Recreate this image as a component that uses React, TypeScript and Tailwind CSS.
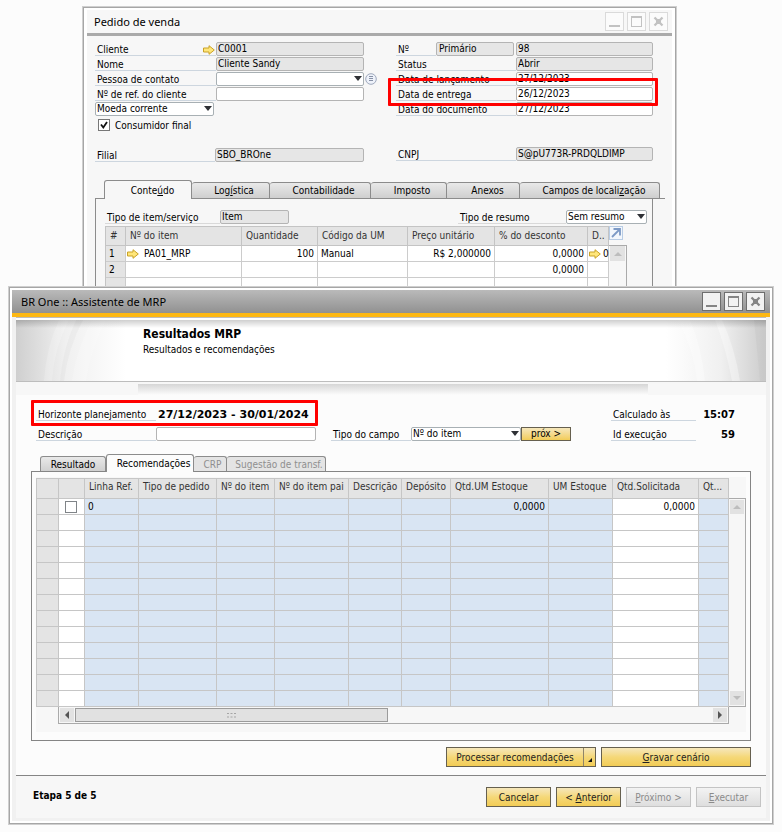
import { useState, type ReactNode } from 'react'

function Arrow() {
  return (
    <svg className="block h-[10px] w-3 shrink-0" viewBox="0 0 12 10" aria-hidden="true">
      <path d="M.5 3h5.500V.700L11.300 5 6 9.300V7H.5z" fill="#ffe67a" stroke="#c9a227" strokeWidth="1" />
    </svg>
  )
}

function WindowButtons({ active }: { active?: boolean }) {
  const box = active
    ? 'flex size-[19px] items-center justify-center border border-[#6e6e6e] bg-[#f2f2f2] text-[#858585]'
    : 'flex size-[19px] items-center justify-center border border-[#dadada] bg-[#fbfbfb] text-[#c2c2c2]'
  return (
    <div className="flex gap-[3px]">
      <button className={box} aria-label="Minimizar">
        <svg className="size-[15px]" viewBox="0 0 15 15"><path d="M2 11h11v2H2z" fill="currentColor" /></svg>
      </button>
      <button className={box} aria-label="Maximizar">
        <svg className="size-[15px]" viewBox="0 0 15 15"><path d="M2 2h11v11H2zM3 4v8h9V4z" fill="currentColor" fillRule="evenodd" /></svg>
      </button>
      <button className={box} aria-label="Fechar">
        <svg className="size-[15px]" viewBox="0 0 15 15"><path d="M3.500 3.500l8 8m0-8l-8 8" stroke="currentColor" strokeWidth="2.300" /><path d="M5 5h5v5H5z" fill="currentColor" /></svg>
      </button>
    </div>
  )
}

function Field({ id, label, value, locked, children, labelWidth }: { id: string; label: string; value?: string; locked?: boolean; children?: ReactNode; labelWidth: string }) {
  return (
    <div className="flex h-[14px]">
      <label htmlFor={id} className={`${labelWidth} flex shrink-0 justify-between border-b border-[#cdd6df] pl-[2px]`}>
        {label}
        {children}
      </label>
      <input
        id={id}
        defaultValue={value}
        readOnly={locked}
        className={`h-[14px] min-w-0 flex-1 rounded-[2px] border border-[#b4b4b4] px-px leading-[14px] ${locked ? 'bg-[#e6e6e6]' : 'bg-white'}`}
      />
    </div>
  )
}

function Select({ id, value, className, label }: { id: string; value: string; className: string; label?: string }) {
  return (
    <div className={`relative ${className}`}>
      <select id={id} aria-label={label} className="block h-[14px] w-full appearance-none rounded-[2px] border border-[#a8b0b4] bg-white pl-px leading-3">
        <option>{value}</option>
      </select>
      <svg className="pointer-events-none absolute right-[2px] top-1 h-[5px] w-2" viewBox="0 0 8 5"><path d="M0 0h8L4 5z" fill="#2f3136" /></svg>
    </div>
  )
}

const salesTabs = [
  { label: <>Conte<u>ú</u>do</>, size: 'w-[88px] pl-[9px]' },
  { label: <>Log<u>í</u>stica</>, size: 'w-[78px] pl-[7px]' },
  { label: <>Contabilidade</>, size: 'w-[101px] pl-[7px]' },
  { label: <>Imposto</>, size: 'w-[76px] pl-[7px]' },
  { label: <>Anexos</>, size: 'w-[73px] pl-[9px]' },
  { label: <>Campos de locali<u>z</u>ação</>, size: 'w-[140px] pl-[9px]' },
]

function SalesOrder() {
  const [checked, setChecked] = useState(true)
  const head = 'border-b border-r border-[#c4c4c4] bg-[#e4e4e4] pb-[2px] pl-1 text-left font-normal align-middle text-[#333]'
  const cell = 'border-b border-r border-[#cccccc] bg-white p-0 px-[3px]'
  const linkCell = 'border-b border-r border-[#cccccc] bg-white p-0 pl-px'
  const num = 'border-b border-r border-[#cccccc] bg-[#e4e4e4] p-0 pl-[3px]'
  return (
    <section className="ml-[82px] mr-[105px] mt-[6px] h-[280px] overflow-hidden border border-b-0 border-[#cfcfcf] bg-white px-1 pt-[3px] shadow-[inset_0_1px_0_#a6a6a6,inset_1px_0_0_#a6a6a6,inset_-1px_0_0_#a6a6a6]">
      <div className="h-full bg-[#f7f7f7]">
        <header className="flex h-[26px] items-center justify-between border-b-[3px] border-[#aaaaaa] pl-[7px] pr-1">
          <h1 className="text-[11px] font-['Noto_Sans',sans-serif]">Pedido de venda</h1>
          <WindowButtons />
        </header>
        <div className="pl-2 pr-[19px] pt-[6px]">
          <div className="flex justify-between leading-[15px]">
            <div className="flex w-[283px] gap-px">
              <div className="flex w-[269px] flex-col gap-px">
                <Field id="cliente" label="Cliente" value="C0001" locked labelWidth="w-[121px]"><span className="mr-px mt-[3px]"><Arrow /></span></Field>
                <Field id="nome" label="Nome" value="Cliente Sandy" locked labelWidth="w-[121px]" />
                <div className="flex h-[14px]">
                  <label htmlFor="contato" className="w-[121px] border-b border-[#cdd6df] pl-[2px]">Pessoa de contato</label>
                  <Select id="contato" value="" className="flex-1" />
                </div>
                <Field id="ref" label="Nº de ref. do cliente" labelWidth="w-[121px]" />
                <Select id="moeda" label="Moeda" value="Moeda corrente" className="w-[119px]" />
                <label className="ml-[3px] flex h-4 items-center gap-[5px]">
                  <span className="relative size-3">
                    <input type="checkbox" checked={checked} onChange={() => setChecked(!checked)} className="block size-3 appearance-none border border-[#777] bg-white" />
                    {checked && <svg className="pointer-events-none absolute inset-0 size-3" viewBox="0 0 12 12"><path d="M3 5.500l2.300 3L9 3" fill="none" stroke="#111" strokeWidth="1.800" /></svg>}
                  </span>
                  Consumidor final
                </label>
                <div className="mt-[14px]"><Field id="filial" label="Filial" value="SBO_BROne" locked labelWidth="w-[120px]" /></div>
              </div>
              <button aria-label="Lista de contatos" className="mt-[31px] size-3">
                <svg viewBox="0 0 12 12" className="size-3"><circle cx="6" cy="6" r="5.300" fill="#eef2fa" stroke="#9fa9bd" /><path d="M4 3.500h4M4 5.500h4M4 7.500h4" stroke="#8791a6" /></svg>
              </button>
            </div>
            <div className="relative flex w-[257px] flex-col gap-px">
              <div className="flex h-[14px]">
                <label htmlFor="serie" className="w-10 border-b border-[#cdd6df] pl-[2px]">Nº</label>
                <input id="serie" readOnly value="Primário" className="h-[14px] w-[78px] rounded-[2px] border border-[#b4b4b4] bg-[#e6e6e6] px-[2px] leading-[14px]" />
                <input aria-label="Número" readOnly value="98" className="ml-[2px] h-[14px] min-w-0 flex-1 rounded-[2px] border border-[#b4b4b4] bg-[#e6e6e6] px-px leading-[14px]" />
              </div>
              <Field id="status" label="Status" value="Abrir" locked labelWidth="w-[120px]" />
              <Field id="lanc" label="Data de lançamento" value="27/12/2023" labelWidth="w-[120px]" />
              <Field id="entrega" label="Data de entrega" value="26/12/2023" labelWidth="w-[120px]" />
              <Field id="doc" label="Data do documento" value="27/12/2023" labelWidth="w-[120px]" />
              <div className="mt-[30px]"><Field id="cnpj" label="CNPJ" value="S@pU773R-PRDQLDIMP" locked labelWidth="w-[120px]" /></div>
              <div className="pointer-events-none absolute -left-2 -right-[5px] top-9 h-7 rounded-[1px] border-[3px] border-[#f00]" />
            </div>
          </div>
          <div role="tablist" className="-mr-3 mt-[18px] flex items-end border-b border-[#8c8c8c] pl-[9px]">
            {salesTabs.map((t, i) => (
              <button
                key={i}
                role="tab"
                aria-selected={i === 0}
                className={`${t.size} rounded-t-[3px] border border-b-0 border-[#8c8c8c] ${i === 0 ? '-mb-px h-[19px] bg-[#f7f7f7]' : 'h-4 border-l-0 bg-linear-to-b from-[#e9e9e9] to-[#cfcfcf]'}`}
              >
                {t.label}
              </button>
            ))}
          </div>
          <div className="h-[90px] border-x border-[#8c8c8c] pl-[9px] pr-[5px] pt-[11px]">
            <div className="flex h-4 justify-between leading-[15px]">
              <div className="flex h-[14px] w-[184px]">
                <label htmlFor="tipo" className="w-[115px] border-b border-[#d9d9d9] pl-[2px]">Tipo de item/serviço</label>
                <input id="tipo" readOnly value="Item" className="h-[14px] min-w-0 flex-1 rounded-[2px] border border-[#b4b4b4] bg-[#e6e6e6] px-px leading-[14px]" />
              </div>
              <div className="flex h-[14px]">
                <label htmlFor="resumo" className="w-[108px] border-b border-[#d9d9d9] pl-[2px]">Tipo de resumo</label>
                <Select id="resumo" value="Sem resumo" className="w-[81px]" />
              </div>
            </div>
            <div className="flex">
              <div className="min-w-0 flex-1">
                <table className="w-full table-fixed border-separate border-spacing-0 border-l border-t border-[#c4c4c4]">
                  <colgroup>
                    <col className="w-5" /><col className="w-[116px]" /><col className="w-[76px]" /><col className="w-[90px]" /><col className="w-[87px]" /><col className="w-[93px]" /><col />
                  </colgroup>
                  <thead>
                    <tr className="h-[19px]">
                      {['#', 'Nº do item', 'Quantidade', 'Código da UM', 'Preço unitário', '% do desconto', 'D..'].map((h) => <th key={h} className={head}>{h}</th>)}
                    </tr>
                  </thead>
                  <tbody>
                    <tr className="h-4">
                      <td className={num}>1</td>
                      <td className={linkCell}><span className="flex items-center gap-[5px] whitespace-nowrap"><Arrow />PA01_MRP</span></td>
                      <td className={`${cell} text-right`}>100</td>
                      <td className={cell}>Manual</td>
                      <td className={`${cell} text-right`}>R$ 2,000000</td>
                      <td className={`${cell} text-right`}>0,0000</td>
                      <td className={linkCell}><span className="flex items-center gap-[2px]"><Arrow />0</span></td>
                    </tr>
                    <tr className="h-4">
                      <td className={num}>2</td>
                      <td className={cell} /><td className={cell} /><td className={cell} /><td className={cell} />
                      <td className={`${cell} text-right`}>0,0000</td>
                      <td className={cell} />
                    </tr>
                    <tr className="h-4">
                      <td className={num} />
                      <td className={cell} /><td className={cell} /><td className={cell} /><td className={cell} /><td className={cell} /><td className={cell} />
                    </tr>
                  </tbody>
                </table>
              </div>
              <div className="mr-5 flex w-[18px] flex-col">
                <button aria-label="Expandir" className="flex h-[14px] w-[14px] items-center justify-center border border-[#b9cde5] bg-[#f3f7fc]">
                  <svg className="size-3" viewBox="0 0 12 12"><path d="M2 10L9 3M3.500 2H10v6.500" fill="none" stroke="#7d9ac6" strokeWidth="1.800" /></svg>
                </button>
                <div className="mt-[5px] h-12 border-r border-t border-[#aaa] pl-px">
                  <button aria-label="Rolar para cima" className="flex size-[15px] items-center justify-center bg-[#e2e2e2]">
                    <svg className="h-1 w-2" viewBox="0 0 8 4"><path d="M4 0l4 4H0z" fill="#bdbdbd" /></svg>
                  </button>
                </div>
              </div>
            </div>
          </div>
        </div>
      </div>
    </section>
  )
}

function Banner() {
  return (
    <div className="relative h-[62px] overflow-hidden border-b border-[#bdbdbd] bg-white">
      <div className="absolute inset-y-0 left-0 w-[110px] bg-linear-to-r from-[#cfcfcf] via-[#f0f0f0] via-45% to-white" />
      <div className="absolute inset-y-0 right-0 w-[100px] bg-linear-to-l from-[#cccccc] via-[#f0f0f0] via-45% to-white" />
      <svg className="absolute inset-y-0 left-0 h-[61px] w-[122px]" viewBox="0 0 122 61" aria-hidden="true">
        <path d="M43 0Q30 28 28 61h8Q38 28 53 0z" fill="#fff" opacity=".2" />
        <path d="M76 0Q60 30 56 61h14Q75 28 90 0z" fill="#fff" opacity=".2" />
        <path d="M60 0Q47 28 44 61h4Q52 28 67 0z" fill="#ccc" opacity=".15" />
      </svg>
      <svg className="absolute inset-y-0 right-0 h-[61px] w-[110px]" viewBox="0 0 110 61" aria-hidden="true">
        <path d="M59 0Q70 28 76 61h8Q79 28 66 0z" fill="#fff" opacity=".35" />
        <path d="M22 0Q38 30 41 61h8Q46 28 34 0z" fill="#fff" opacity=".3" />
        <path d="M98 0Q101 28 104 61h6V0z" fill="#bbb" opacity=".2" />
      </svg>
      <div className="absolute inset-x-0 top-0 h-2 bg-linear-to-b from-[#00000030] to-transparent" />
      <div className="relative pl-[127px] pt-[6px]">
        <h2 className="text-xs font-bold leading-[17px]">Resultados MRP</h2>
        <p>Resultados e recomendações</p>
      </div>
    </div>
  )
}

const mrpColumns = [
  { label: '', width: 'w-[22px]' },
  { label: '', width: 'w-[26px]' },
  { label: 'Linha Ref.', width: 'w-[54px]' },
  { label: 'Tipo de pedido', width: 'w-[78px]' },
  { label: 'Nº do item', width: 'w-[58px]' },
  { label: 'Nº do item pai', width: 'w-[74px]' },
  { label: 'Descrição', width: 'w-[53px]' },
  { label: 'Depósito', width: 'w-[49px]' },
  { label: 'Qtd.UM Estoque', width: 'w-[98px]' },
  { label: 'UM Estoque', width: 'w-[64px]' },
  { label: 'Qtd.Solicitada', width: 'w-[86px]' },
  { label: 'Qt...', width: '' },
]

function MrpGrid() {
  return (
    <div className="flex">
      <div className="min-w-0 flex-1">
        <table className="w-full table-fixed border-separate border-spacing-0 border-l border-t border-[#c6c6c6]">
          <colgroup>{mrpColumns.map((c, i) => <col key={i} className={c.width} />)}</colgroup>
          <thead>
            <tr className="h-5">
              {mrpColumns.map((c, i) => (
                <th key={i} className="whitespace-nowrap border-b border-r border-[#c6c6c6] bg-[#e4e4e4] p-0 pb-1 pl-1 text-left font-normal text-[#333]">{c.label}</th>
              ))}
            </tr>
          </thead>
          <tbody>
            {Array.from({ length: 13 }, (_, r) => (
              <tr key={r} className="h-4">
                {mrpColumns.map((c, i) => (
                  <td key={i} className={`h-4 border-b border-r border-[#c6c6c6] p-0 px-[3px] ${i === 0 ? 'bg-[#e4e4e4]' : i === 1 || i === 10 ? 'bg-white' : 'bg-[#d9e5f3]'} ${i > 7 ? 'text-right' : ''}`}>
                    {r === 0 && i === 1 && <input type="checkbox" aria-label="Selecionar linha" className="ml-[3px] block size-3 appearance-none border border-[#808488] bg-white" />}
                    {r === 0 && i === 2 && '0'}
                    {r === 0 && (i === 8 || i === 10) && '0,0000'}
                  </td>
                ))}
              </tr>
            ))}
          </tbody>
        </table>
        <div className="ml-[22px] flex h-[17px] justify-between border border-t-0 border-[#aaa] bg-[#f7f7f7] p-px">
          <button aria-label="Rolar para a esquerda" className="flex size-[14px] items-center justify-center bg-[#e2e2e2]">
            <svg className="h-2 w-1" viewBox="0 0 4 8"><path d="M4 0v8L0 4z" fill="#555" /></svg>
          </button>
          <div className="ml-px mr-auto flex w-[47%] items-center justify-center border border-[#9b9b9b] bg-[#e1e1e1]">
            <svg className="h-[6px] w-[9px]" viewBox="0 0 9 6"><path d="M0 1.500h2M3.500 1.500h2M7 1.500h2M0 5h2M3.500 5h2M7 5h2" stroke="#a5a5a5" /></svg>
          </div>
          <button aria-label="Rolar para a direita" className="flex size-[14px] items-center justify-center bg-[#e2e2e2]">
            <svg className="h-2 w-1" viewBox="0 0 4 8"><path d="M0 0v8l4-4z" fill="#555" /></svg>
          </button>
        </div>
      </div>
      <div className="mb-[17px] mt-5 flex w-[17px] flex-col justify-between border-y border-r border-[#aaa] bg-[#f7f7f7] p-px">
        <button aria-label="Rolar para cima" className="flex size-[14px] items-center justify-center bg-[#e2e2e2]">
          <svg className="h-1 w-2" viewBox="0 0 8 4"><path d="M4 0l4 4H0z" fill="#bdbdbd" /></svg>
        </button>
        <button aria-label="Rolar para baixo" className="flex size-[14px] items-center justify-center bg-[#e2e2e2]">
          <svg className="h-1 w-2" viewBox="0 0 8 4"><path d="M0 0h8L4 4z" fill="#bdbdbd" /></svg>
        </button>
      </div>
    </div>
  )
}

const gold = 'border border-[#66604f] bg-linear-to-b from-[#f6e7bb] via-[#f5d878] to-[#f2cc55] text-[#222]'
const muted = 'border border-[#c4c4c4] bg-linear-to-b from-[#f3f3f3] to-[#dedede] text-[#8b8b8b]'

function MrpAssistant() {
  const tab = 'rounded-t-[3px] border border-b-0 border-[#8c8c8c]'
  const caption = 'h-[14px] border-b border-[#cdd6df] pl-[2px]'
  return (
    <section className="relative mx-2 border border-[#cfcfcf] bg-white p-[3px] shadow-[inset_0_0_0_1px_#a6a6a6]">
      <header className="flex h-[27px] items-center justify-between border-b-4 border-[#fdb813] bg-linear-to-b from-[#bababa] to-[#919191] pl-[9px] pr-[5px]">
        <h1 className="text-[11px] font-['Noto_Sans',sans-serif]">BR One :: Assistente de MRP</h1>
        <WindowButtons active />
      </header>
      <div className="border-x-4 border-b-[3px] border-[#f1f1f1] bg-[#fcfcfc]">
        <div className="h-[3px] border-t border-[#bdbdbd] bg-white" />
        <Banner />
        <div className="flex justify-center bg-[#f7f7f7] pt-[2px]">
          <div className="ml-[122px] mr-[118px] h-[11px] flex-1 bg-linear-to-b from-[#d6d6d6] to-[#fcfcfc]" />
        </div>
        <div className="px-[15px] pt-[5px]">
          <div className="flex justify-between pl-[5px] pr-4 leading-[15px]">
            <div>
              <div className="relative flex h-[21px] items-end">
                <div className="pointer-events-none absolute -left-[5px] top-0 h-[26px] w-[287px] rounded-[1px] border-[3px] border-[#f00]" />
                <span className={`${caption} w-[120px]`}>Horizonte planejamento</span>
                <strong className="h-[14px] pl-[2px] font-['DejaVu_Sans',sans-serif] text-[11px]">27/12/2023 - 30/01/2024</strong>
              </div>
              <div className="mt-[6px] flex">
                <label htmlFor="desc" className={`${caption} w-[120px]`}>Descrição</label>
                <input id="desc" className="h-[14px] w-40 rounded-[2px] border border-[#b4b4b4] bg-white px-px leading-[14px]" />
                <label htmlFor="campo" className={`${caption} ml-[15px] w-20`}>Tipo do campo</label>
                <Select id="campo" value="Nº do item" className="w-[110px]" />
                <button className="h-[14px] w-[50px] border border-[#66604f] bg-linear-to-b from-[#f6e7bb] to-[#f2cc55] leading-3">próx &gt;</button>
              </div>
            </div>
            <dl className="grid w-[124px] grid-cols-[85px_1fr] auto-rows-[14px] gap-y-[6px] pt-[7px]">
              <dt className={caption}>Calculado às</dt>
              <dd className="text-right font-bold font-['DejaVu_Sans',sans-serif]">15:07</dd>
              <dt className={caption}>Id execução</dt>
              <dd className="text-right font-bold font-['DejaVu_Sans',sans-serif]">59</dd>
            </dl>
          </div>
          <div role="tablist" className="mt-[13px] flex items-end pl-[9px]">
            <button role="tab" className={`${tab} h-[15px] w-[66px] bg-linear-to-b from-[#e9e9e9] to-[#d0d0d0]`}>Resultado</button>
            <button role="tab" aria-selected="true" className={`${tab} relative -mb-px h-[18px] w-[88px] bg-[#fcfcfc] pl-[7px]`}>Recomendações</button>
            <button role="tab" disabled className={`${tab} h-[15px] w-[33px] border-l-0 bg-[#e4e4e4] pl-[5px] text-[#8f8f8f]`}>CRP</button>
            <button role="tab" disabled className={`${tab} h-[15px] w-[99px] border-l-0 bg-[#e4e4e4] pl-[6px] text-[#8f8f8f]`}>Sugestão de transf.</button>
          </div>
          <div className="border border-[#858585] px-1 pb-2 pt-[5px]">
            <div className="bg-[#f7f7f7] pb-2 pt-px"><MrpGrid /></div>
          </div>
          <div className="flex justify-end gap-[5px] pb-2 pt-[6px]">
            <button className={`${gold} flex h-5 w-[150px] items-center`}>
              <span className="flex-1">Processar recomendações</span>
              <span className="flex h-[18px] w-3 items-end border-l border-[#8f8468] pb-1 pl-1"><svg className="size-1" viewBox="0 0 4 4"><path d="M4 0v4H0z" fill="#111" /></svg></span>
            </button>
            <button className={`${gold} h-5 w-[150px]`}><u>G</u>ravar cenário</button>
          </div>
        </div>
        <footer className="flex h-[43px] items-center justify-between border-t border-[#858585] bg-[#f7f7f7] pl-[17px] pr-[5px]">
          <strong className="pb-1">Etapa 5 de 5</strong>
          <div className="flex gap-[5px]">
            <button className={`${gold} h-5 w-[65px]`}>Cancelar</button>
            <button className={`${gold} h-5 w-[65px]`}>&lt; <u>A</u>nterior</button>
            <button disabled className={`${muted} h-5 w-[65px]`}><u>P</u>róximo &gt;</button>
            <button disabled className={`${muted} h-5 w-[65px]`}><u>E</u>xecutar</button>
          </div>
        </footer>
      </div>
    </section>
  )
}

export default function App() {
  return (
    <main className="flex min-h-screen flex-col bg-[#fcfcfc] font-['DejaVu_Sans_Condensed','Noto_Sans',sans-serif] text-[10px] leading-[13px] text-black">
      <SalesOrder />
      <MrpAssistant />
    </main>
  )
}
